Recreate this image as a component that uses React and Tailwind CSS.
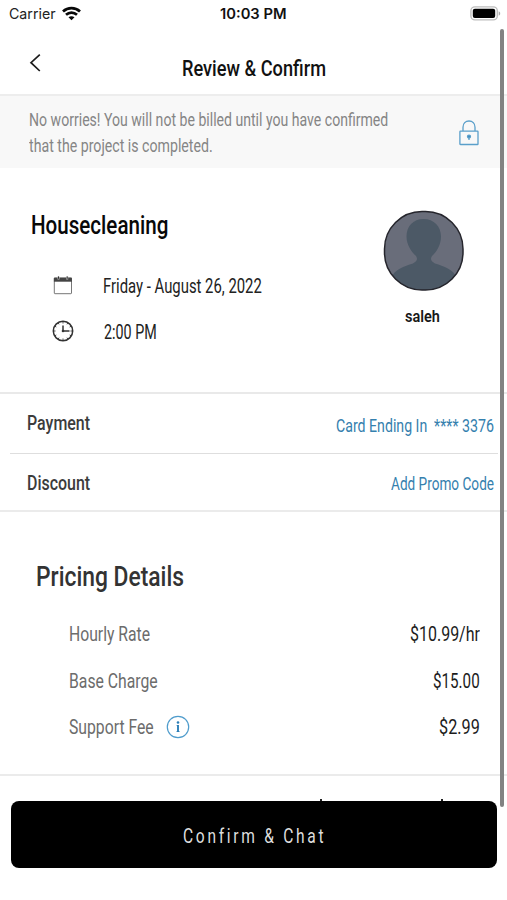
import { useLayoutEffect, useRef, useState } from 'react';
import clsx from 'clsx';

// Condenses a single line of text horizontally so that it fills its box.
function Condensed({ className, children }) {
  const box = useRef(null);
  const text = useRef(null);
  const [scale, setScale] = useState(0.75);
  useLayoutEffect(() => {
    setScale(box.current.clientWidth / text.current.offsetWidth);
  }, [children]);
  return (
    <span ref={box} className={clsx('block shrink-0 whitespace-pre', className)}>
      <span ref={text} className="inline-block origin-left" style={{ transform: `scaleX(${scale})` }}>
        {children}
      </span>
    </span>
  );
}

function StatusBar() {
  return (
    <div className="grid h-[27px] grid-cols-3 items-center font-['Inter',sans-serif] text-black">
      <div className="flex items-center gap-[6px] pl-[9px]">
        <Condensed className="h-5 w-[47px] text-[14.5px] leading-5 text-[#222]">Carrier</Condensed>
        <svg width="19" height="15" viewBox="0 0 19 15" fill="none" stroke="#080808" strokeWidth="2.7" className="-mt-px">
          <path d="M1 5.4C5.8 .9 13.2 .9 18 5.4" />
          <path d="M4 8.8c3.2-2.9 7.8-2.9 11 0" />
          <path d="M9.5 14.2 6.5 11.3c1.7-1.5 4.3-1.500 6 0Z" fill="#080808" stroke="none" />
        </svg>
      </div>
      <div className="flex justify-center">
        <Condensed className="h-5 w-[67px] text-[14.5px] font-semibold leading-5 text-[#111]">10:03 PM</Condensed>
      </div>
      <div className="flex justify-end pr-[6px]">
        <svg width="31" height="15" viewBox="0 0 31 15">
          <rect x=".9" y=".9" width="26.4" height="13" rx="4" fill="#fff" stroke="#bdbdbd" strokeWidth="1.4" />
          <rect x="2.8" y="2.8" width="22.4" height="9.2" rx="2" fill="#000" />
          <path d="M28.7 5.2c2 .8 2 3.700 0 4.500Z" fill="#aaa" />
        </svg>
      </div>
    </div>
  );
}

function LockIcon() {
  return (
    <svg width="20" height="26" viewBox="0 0 20 26" fill="none" stroke="#5a9fca" strokeWidth="1.300">
      <rect x=".9" y="11.200" width="18.100" height="13.300" rx=".6" />
      <path d="M4 11V7.200C4 3.500 6.500 1 10 1s6 2.500 6 6.200V11" />
      <circle cx="10" cy="16.600" r="1.500" fill="#3c88bd" />
      <path d="M10 17v3" />
    </svg>
  );
}

function CalendarIcon() {
  return (
    <svg width="20" height="19" viewBox="0 0 20 19" fill="none" className="-mt-[2px]">
      <rect x="1.300" y="2" width="17.200" height="15.700" rx=".6" stroke="#777" strokeWidth="1" />
      <path d="M.9 1.700h18v4H.9Z" fill="#444" />
      <path d="M5.500 .4v3M14.200 .4v3" stroke="#bbb" strokeWidth="2" />
      <path d="M5.500 .4v2.400M14.200 .4v2.400" stroke="#333" strokeWidth="1" />
    </svg>
  );
}

function ClockIcon() {
  return (
    <svg width="22" height="22" viewBox="0 0 22 22" fill="none" stroke="#333" className="-mt-[2px]">
      <circle cx="11" cy="11" r="9.700" strokeWidth="1.500" />
      <path d="M11 5.500V11h6.500" strokeWidth="1.500" />
      <path d="M11 1.500v2M11 18.500v2M1.500 11h2M18.500 11h2M6.200 2.800l.8 1.500M15.800 2.800 15 4.300M2.800 6.200l1.500.8M19.200 6.200l-1.500.8M2.800 15.800l1.500-.8M19.200 15.800l-1.500-.8M6.200 19.200l.8-1.500M15.800 19.200l-.8-1.500" strokeWidth=".9" />
      <circle cx="11" cy="11" r="1.300" fill="#333" stroke="none" />
    </svg>
  );
}

function InfoIcon() {
  return (
    <svg width="24" height="24" viewBox="0 0 24 24" fill="none">
      <circle cx="12" cy="12" r="10.700" stroke="#4f9ccc" strokeWidth="1.200" />
      <circle cx="12" cy="7.500" r="1.300" fill="#2c7fb8" />
      <path d="M10.700 10.500h1.600M10.600 16.500h2.900" stroke="#2c7fb8" strokeWidth="1" />
      <path d="M12 10v7" stroke="#2c7fb8" strokeWidth="1.900" />
    </svg>
  );
}

function Avatar() {
  return (
    <svg width="82" height="82" viewBox="0 0 82 82">
      <defs>
        <clipPath id="portrait">
          <rect x="1.500" y="1.500" width="78.500" height="78.500" rx="37.500" />
        </clipPath>
      </defs>
      <g clipPath="url(#portrait)">
        <path d="M0 0h82v82H0Z" fill="#696d7a" />
        <path d="M40.500 9C30 9 23.500 16.500 23.500 26.500c0 8 4.500 15 9.500 19.500 2 3 1 5.500-3 7.500C21 56.500 12 59 8 68v14h66V68c-4-9-13-11.500-22-14.500-4-2-5-4.500-3-7.500 5-4.500 9-11.500 9-19.500C58 16.500 51 9 40.500 9Z" fill="#4c5966" />
      </g>
      <rect x="1.500" y="1.500" width="78.500" height="78.500" rx="37.500" fill="none" stroke="#25252c" strokeWidth="1.500" />
    </svg>
  );
}

function PriceRow({ label, labelWidth, price, priceWidth, info }) {
  return (
    <div className="flex h-[46.500px] items-start justify-between pl-[69px] pr-[27px]">
      <div className="flex items-center gap-[12px]">
        <Condensed className={clsx('h-6 text-[20px] leading-6 text-[#6c6c6c]', labelWidth)}>{label}</Condensed>
        {info && <InfoIcon />}
      </div>
      <Condensed className={clsx('h-6 text-[21px] leading-6 text-[#1c1c1c]', priceWidth)}>{price}</Condensed>
    </div>
  );
}

export default function App() {
  return (
    <div className="relative flex h-[900px] w-[507px] flex-col overflow-hidden bg-white font-['Roboto',sans-serif]">
      <StatusBar />

      <header className="grid h-[69px] shrink-0 grid-cols-[182px_1fr] border-b-2 border-[#ededed]">
        <svg width="14" height="20" viewBox="0 0 14 20" fill="none" stroke="#1c1c1c" strokeWidth="1.700" className="ml-[28px] mt-[26px]">
          <path d="M11.800 1.700 3 9.700l8.800 8.300" />
        </svg>
        <Condensed className="mt-[28px] h-[26px] w-[144px] text-[22.5px] font-medium leading-[26px] text-[#111]">Review &amp; Confirm</Condensed>
      </header>

      <section className="flex h-[72px] shrink-0 items-start justify-between bg-[#f8f8f8] pl-[29px] pr-[28px]">
        <div className="pt-[11px] text-[18px] leading-[26px] text-[#858585]">
          <Condensed className="h-[26px] w-[359px]">No worries! You will not be billed until you have confirmed</Condensed>
          <Condensed className="h-[26px] w-[184px]">that the project is completed.</Condensed>
        </div>
        <div className="mt-[24px]">
          <LockIcon />
        </div>
      </section>

      <section className="flex h-[226px] shrink-0 justify-between border-b-2 border-[#e9e9e9] pl-[31px] pr-[42px]">
        <div className="pt-[42px]">
          <Condensed className="h-[30px] w-[137px] text-[26px] font-medium leading-[30px] text-[#080808]">Housecleaning</Condensed>
          <div className="mt-[31px] flex h-[30px] items-center">
            <div className="flex w-[72px] justify-start pl-[22px]">
              <CalendarIcon />
            </div>
            <Condensed className="h-6 w-[159px] text-[20px] leading-6 text-[#222]">Friday - August 26, 2022</Condensed>
          </div>
          <div className="mt-[16px] flex h-[30px] items-center">
            <div className="flex w-[73px] justify-start pl-[21px]">
              <ClockIcon />
            </div>
            <Condensed className="h-6 w-[53px] text-[20px] leading-6 text-[#222]">2:00 PM</Condensed>
          </div>
        </div>
        <div className="flex flex-col items-center pt-[42px]">
          <Avatar />
          <Condensed className="mr-[3px] mt-[14px] h-5 w-[35px] text-[17px] font-semibold leading-5 text-[#181818]">saleh</Condensed>
        </div>
      </section>

      <section className="shrink-0 border-b-2 border-[#ebebeb]">
        <div className="flex h-[59px] justify-between pl-[27px] pr-[13px]">
          <Condensed className="mt-[17px] h-6 w-[63px] text-[20px] font-medium leading-6 text-[#3c3c3c]">Payment</Condensed>
          <div className="mt-[20px] flex gap-[7px] text-[18.5px] leading-6 text-[#3480ae]">
            <Condensed className="h-6 w-[91px]">Card Ending In</Condensed>
            <Condensed className="h-6 w-[60px]">**** 3376</Condensed>
          </div>
        </div>
        <div className="ml-[10px] mr-[9px] h-px bg-[#dedede]" />
        <div className="flex h-[56px] justify-between pl-[27px] pr-[13px]">
          <Condensed className="mt-[17px] h-6 w-[63px] text-[20px] font-medium leading-6 text-[#3c3c3c]">Discount</Condensed>
          <Condensed className="mt-[18px] h-6 w-[103px] text-[18.5px] leading-6 text-[#3480ae]">Add Promo Code</Condensed>
        </div>
      </section>

      <section className="h-[264px] shrink-0 border-b-2 border-[#ebebeb] pt-[49px]">
        <Condensed className="ml-[36px] h-8 w-[148px] text-[27px] font-medium leading-8 text-[#333]">Pricing Details</Condensed>
        <div className="mt-[29px]">
          <PriceRow label="Hourly Rate" labelWidth="w-[81px]" price="$10.99/hr" priceWidth="w-[70px]" />
          <PriceRow label="Base Charge" labelWidth="w-[89px]" price="$15.00" priceWidth="w-[47px]" />
          <PriceRow label="Support Fee" labelWidth="w-[85px]" price="$2.99" priceWidth="w-[41px]" info />
        </div>
      </section>

      {/* Tips of the total row that is scrolled under the button */}
      <div className="flex h-[25px] shrink-0 items-end gap-[119px] pl-[320px]">
        <span className="h-[2px] w-[2px] bg-[#222]" />
        <span className="h-[2px] w-[2px] bg-[#222]" />
      </div>

      <button className="ml-[11px] flex h-[67px] w-[486px] shrink-0 justify-center rounded-[8px] bg-black text-[#dedede]">
        <Condensed className="mt-[23px] h-6 w-[143px] text-left text-[20px] leading-6 tracking-[3.5px]">Confirm &amp; Chat</Condensed>
      </button>

      <div className="absolute left-[500px] top-[29px] h-[778px] w-[3.5px] rounded-full bg-[#828282]" />
    </div>
  );
}
